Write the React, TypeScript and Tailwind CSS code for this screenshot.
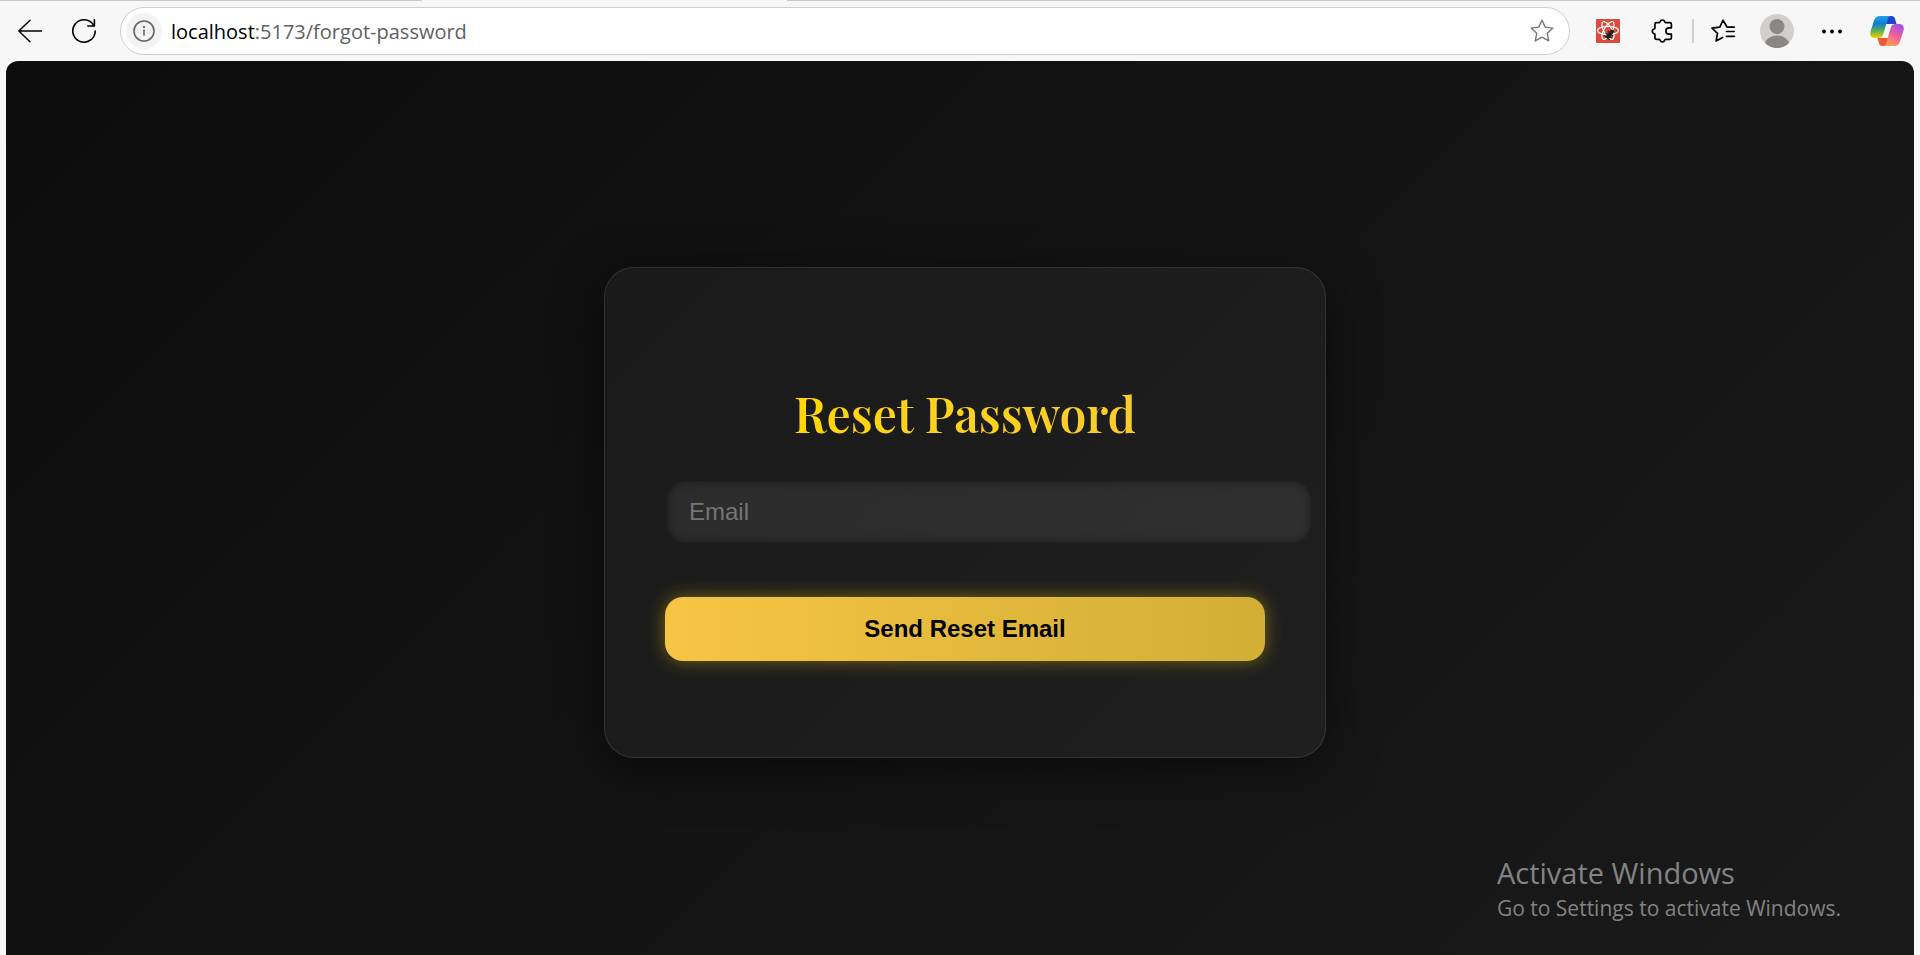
import type { ReactNode } from "react";

function ToolButton({ label, children }: { label: string; children: ReactNode }) {
  return (
    <button type="button" aria-label={label} className="flex size-9 shrink-0 items-center justify-center text-black">
      {children}
    </button>
  );
}

const line = { fill: "none", stroke: "currentColor", strokeLinecap: "round", strokeLinejoin: "round" } as const;

function BrowserBar() {
  return (
    <header className="flex h-[60px] items-start bg-[#f7f7f7] pt-1.5 pr-[15px] pl-3">
      <div className="flex h-12 items-center gap-[18px]">
        <ToolButton label="Back">
          <svg viewBox="0 0 24 24" className="size-6" {...line} strokeWidth="1.5">
            <path d="M23.5 12H.8M12 1.3.8 12 12 22.7" />
          </svg>
        </ToolButton>
        <ToolButton label="Refresh">
          <svg viewBox="0 0 24 24" className="size-6" {...line} strokeWidth="1.6">
            <path d="M23.2 12A11.2 11.2 0 1 1 20.6 4.8L22.2 7M22.4.8V7h-6.6" />
          </svg>
        </ToolButton>
      </div>
      <form
        className="ml-[18px] flex h-12 grow items-center rounded-full border border-[#cfcfcf] bg-white pr-[15px] pl-[5px]"
        onSubmit={(e) => e.preventDefault()}
      >
        <span className="flex size-9 shrink-0 items-center justify-center rounded-full bg-[#f3f3f3] text-[#666]">
          <svg viewBox="0 0 22 22" className="size-[22px]" {...line} strokeWidth="1.6">
            <circle cx="11" cy="11" r="10" />
            <path d="M11 10v5" />
            <circle cx="11" cy="6.9" r=".4" />
          </svg>
        </span>
        <p className="grow pt-px pl-[9px] font-['Open_Sans','Noto_Sans',sans-serif] text-xl text-[#5f5f5f]">
          <span className="text-black">localhost</span>:5173/forgot-password
        </p>
        <button type="button" aria-label="Add to favorites" className="text-[#767676]">
          <svg viewBox="0 0 24 24" className="size-6" {...line} strokeWidth="1.4">
            <path d="M12 1.2l3.3 6.9 7.5 1-5.5 5.2 1.4 7.6-6.7-3.7-6.7 3.7 1.4-7.6L1.2 9.1l7.5-1z" />
          </svg>
        </button>
      </form>
      <div className="ml-5 flex h-12 items-center gap-[19px]">
        <ToolButton label="React Developer Tools">
          <svg viewBox="0 0 24 24" className="size-6">
            <rect width="24" height="24" rx="1" fill="#dc4a3b" />
            <g fill="none" stroke="#fff" strokeWidth="1.2">
              <ellipse cx="12" cy="11.5" rx="10.5" ry="4" />
              <ellipse cx="12" cy="11.5" rx="10" ry="4" transform="rotate(60 12 11.5)" />
              <ellipse cx="12" cy="11.5" rx="10" ry="4" transform="rotate(120 12 11.5)" />
            </g>
            <g transform="rotate(40 14 15)">
              <ellipse cx="14" cy="16.5" rx="2.3" ry="3.6" fill="#222" />
              <circle cx="14" cy="12" r="2.1" fill="#222" />
              <path d="M10.5 14l7 .5M10 17h8M10.500 20l7-.5" stroke="#222" strokeWidth="1.300" />
            </g>
          </svg>
        </ToolButton>
        <ToolButton label="Extensions">
          <svg viewBox="0 0 24 24" className="size-6" {...line} strokeWidth="1.7">
            <path d="M5.500 3.600h2.700c.6 0 .8-.4.9-.9a2.400 2.400 0 0 1 4.600 0c.1.5.4.9.9.9h4.200a1.600 1.600 0 0 1 1.600 1.600v3.600h-2.300a3.200 3.200 0 0 0 0 6.400h2.300v3.600a1.600 1.600 0 0 1-1.600 1.600h-4.200c-.5 0-.8.4-.9.9a2.400 2.400 0 0 1-4.600 0c-.1-.5-.3-.9-.9-.9H5.500a1.600 1.600 0 0 1-1.600-1.600v-3.400c0-.5-.4-.7-.9-.8a2.400 2.400 0 0 1 0-4.600c.5-.1.9-.3.9-.8V5.200a1.600 1.600 0 0 1 1.600-1.600z" />
          </svg>
        </ToolButton>
      </div>
      <div className="ml-[11px] flex h-12 items-center gap-[11px]">
        <span className="h-6 w-0.5 bg-[#d0d0d0]" />
        <ToolButton label="Favorites">
          <svg viewBox="0 0 24 24" className="size-6" {...line} strokeWidth="1.700">
            <path d="M23.200 8.200h-7L12 1.300 8.800 8.100 1 9.100l5.500 5.200-1.400 7.700 6.500-3.500M15.500 12.500h7.700M15.500 17.300h7.700" />
          </svg>
        </ToolButton>
      </div>
      <div className="ml-[18px] flex h-12 items-center gap-[19px]">
        <ToolButton label="Profile">
          <svg viewBox="0 0 34 34" className="size-[34px]">
            <clipPath id="avatar">
              <circle cx="17" cy="17" r="17" />
            </clipPath>
            <g clipPath="url(#avatar)">
              <rect width="34" height="34" fill="#d1cfcc" />
              <circle cx="17" cy="12.500" r="7.500" fill="#8b8785" />
              <ellipse cx="17" cy="31.500" rx="12.500" ry="10" fill="#8b8785" />
            </g>
          </svg>
        </ToolButton>
        <ToolButton label="Settings and more">
          <svg viewBox="0 0 24 24" className="size-6" fill="currentColor">
            <circle cx="4" cy="12.500" r="1.900" />
            <circle cx="12" cy="12.500" r="1.900" />
            <circle cx="20" cy="12.500" r="1.900" />
          </svg>
        </ToolButton>
        <ToolButton label="Copilot">
          <Copilot />
        </ToolButton>
      </div>
    </header>
  );
}

function Copilot() {
  return (
    <svg viewBox="0 0 34 30" className="h-[30px] w-[34px]">
      <defs>
        <linearGradient id="cpA" x1="0" y1="0" x2="0" y2="1">
          <stop offset="0" stopColor="#1aa5e8" />
          <stop offset=".35" stopColor="#1479d6" />
          <stop offset=".6" stopColor="#45a86a" />
          <stop offset="1" stopColor="#f2cf00" />
        </linearGradient>
        <linearGradient id="cpB" x1=".8" y1="0" x2=".3" y2="1">
          <stop offset="0" stopColor="#a04df0" />
          <stop offset=".5" stopColor="#f0609a" />
          <stop offset="1" stopColor="#ffa050" />
        </linearGradient>
      </defs>
      <path d="M17 0h4.500c2 0 3 1 3.500 2.800L26.500 8H16z" fill="#1b46c8" />
      <path d="M17 30h-4.500c-2 0-3-1-3.500-2.800L7.500 22H18z" fill="#ee5a36" />
      <path d="M10 0h11c-2 0-2.800 1.500-3.400 3.500l-4.400 15C12.200 21.500 10.800 22 8.500 22H5c-4 0-5.500-2.500-4.500-6.500L4 4.500C5 1.500 7 0 10 0z" fill="url(#cpA)" />
      <path d="M24 30H13c2 0 2.800-1.500 3.400-3.500l4.400-15C21.800 8.500 23.200 8 25.500 8H29c4 0 5.500 2.500 4.500 6.500L30 25.500c-1 3-3 4.500-6 4.500z" fill="url(#cpB)" />
    </svg>
  );
}

function ResetCard() {
  return (
    <section className="w-full max-w-[722px] rounded-[30px] border border-white/10 bg-white/4 px-[60px] pt-[115px] pb-24 shadow-[0_12px_48px_rgba(0,0,0,0.5)]">
      <h1 className="text-center font-['Playfair_Display','Liberation_Serif',serif] text-5xl leading-[60px] font-semibold">
        <span className="bg-linear-to-r from-[#ffd700] to-[#f9cc2b] bg-clip-text text-transparent">Reset Password</span>
      </h1>
      <form className="mt-[38px] flex flex-col gap-[54px]" onSubmit={(e) => e.preventDefault()}>
        <input
          type="email"
          aria-label="Email"
          placeholder="Email"
          className="-mr-[46px] ml-0.5 h-[62px] rounded-[18px] bg-white/8 px-[22px] text-2xl text-white shadow-[inset_0_0_9px_rgba(0,0,0,0.5)] outline-none placeholder:text-[#757575]"
        />
        <button
          type="submit"
          className="h-16 rounded-[18px] bg-linear-to-r from-[#f7c544] to-[#d2ae36] text-2xl font-bold text-black shadow-[0_0_18px_rgba(255,215,0,0.4)]"
        >
          Send Reset Email
        </button>
      </form>
    </section>
  );
}

export default function App() {
  return (
    <div className="flex min-h-screen flex-col bg-[#f7f7f7] font-['Liberation_Sans',Arial,sans-serif]">
      <div className="flex h-px">
        <span className="w-[22%] bg-[#c8c8c8]" />
        <span className="ml-auto w-[59%] bg-[#c8c8c8]" />
      </div>
      <BrowserBar />
      <main className="relative mx-1.5 flex grow items-center justify-center overflow-hidden rounded-t-xl bg-linear-135 from-[#0d0d0d] to-[#1a1a1a] pt-2 pl-2.5">
        <ResetCard />
        <aside className="absolute right-[73px] bottom-8 font-['Open_Sans','Noto_Sans',sans-serif] text-[#838383]">
          <p className="text-[29px] leading-10">Activate Windows</p>
          <p className="text-[21px] leading-[30px]">Go to Settings to activate Windows.</p>
        </aside>
      </main>
    </div>
  );
}
